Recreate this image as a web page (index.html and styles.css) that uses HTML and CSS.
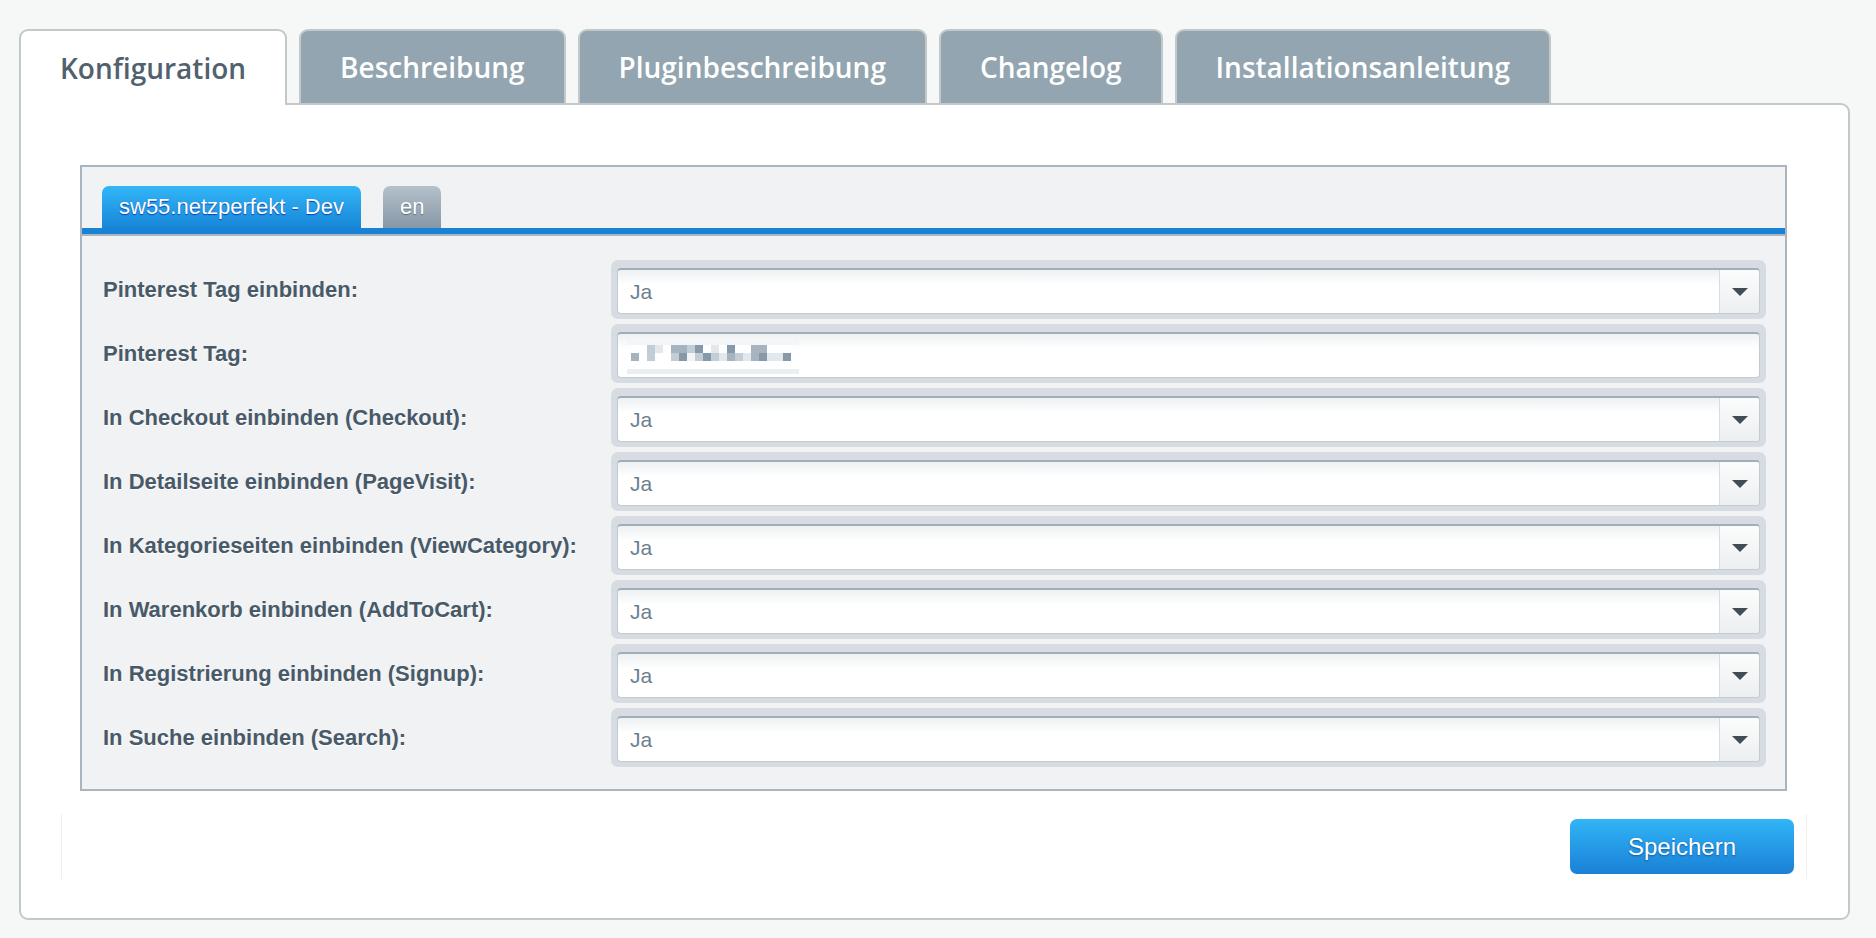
FILE: index.html
```html
<!DOCTYPE html>
<html lang="de">
<head>
<meta charset="utf-8">
<title>Konfiguration</title>
<link rel="stylesheet" href="styles.css">
</head>
<body>
<div class="page">
  <div class="tabs">
    <div class="tab active">Konfiguration</div>
    <div class="tab">Beschreibung</div>
    <div class="tab">Pluginbeschreibung</div>
    <div class="tab">Changelog</div>
    <div class="tab">Installationsanleitung</div>
  </div>
  <div class="panel">
    <div class="config">
      <div class="shop-tabs">
        <div class="shop-tab current">sw55.netzperfekt - Dev</div>
        <div class="shop-tab">en</div>
      </div>
      <div class="shop-bar"></div>
      <div class="rows">
        <div class="row">
          <div class="label">Pinterest Tag einbinden:</div>
          <div class="wrap"><div class="field"><div class="value">Ja</div><div class="trigger"><svg width="16" height="8" viewBox="0 0 16 8"><path d="M0 0H16L8 8Z" fill="#414c57"/></svg></div></div></div>
        </div>
        <div class="row">
          <div class="label">Pinterest Tag:</div>
          <div class="wrap"><div class="field"><div class="value">
            <div class="redact">
              <div class="band"></div>
              <div class="pix">
                <i></i><i></i><i class="b"></i><i class="a"></i><i></i><i class="c"></i><i class="c"></i><i class="b"></i><i class="d"></i><i></i><i class="a"></i><i></i><i class="d"></i><i></i><i></i><i class="c"></i><i class="c"></i><i></i><i></i><i></i>
                <i class="c"></i><i></i><i class="b"></i><i></i><i></i><i class="b"></i><i class="d"></i><i class="w"></i><i class="b"></i><i class="d"></i><i class="b"></i><i class="a"></i><i class="c"></i><i class="b"></i><i class="a"></i><i class="c"></i><i class="d"></i><i class="a"></i><i class="a"></i><i class="d"></i>
              </div>
              <div class="band low"></div>
            </div>
          </div></div></div>
        </div>
        <div class="row">
          <div class="label">In Checkout einbinden (Checkout):</div>
          <div class="wrap"><div class="field"><div class="value">Ja</div><div class="trigger"><svg width="16" height="8" viewBox="0 0 16 8"><path d="M0 0H16L8 8Z" fill="#414c57"/></svg></div></div></div>
        </div>
        <div class="row">
          <div class="label">In Detailseite einbinden (PageVisit):</div>
          <div class="wrap"><div class="field"><div class="value">Ja</div><div class="trigger"><svg width="16" height="8" viewBox="0 0 16 8"><path d="M0 0H16L8 8Z" fill="#414c57"/></svg></div></div></div>
        </div>
        <div class="row">
          <div class="label">In Kategorieseiten einbinden (ViewCategory):</div>
          <div class="wrap"><div class="field"><div class="value">Ja</div><div class="trigger"><svg width="16" height="8" viewBox="0 0 16 8"><path d="M0 0H16L8 8Z" fill="#414c57"/></svg></div></div></div>
        </div>
        <div class="row">
          <div class="label">In Warenkorb einbinden (AddToCart):</div>
          <div class="wrap"><div class="field"><div class="value">Ja</div><div class="trigger"><svg width="16" height="8" viewBox="0 0 16 8"><path d="M0 0H16L8 8Z" fill="#414c57"/></svg></div></div></div>
        </div>
        <div class="row">
          <div class="label">In Registrierung einbinden (Signup):</div>
          <div class="wrap"><div class="field"><div class="value">Ja</div><div class="trigger"><svg width="16" height="8" viewBox="0 0 16 8"><path d="M0 0H16L8 8Z" fill="#414c57"/></svg></div></div></div>
        </div>
        <div class="row">
          <div class="label">In Suche einbinden (Search):</div>
          <div class="wrap"><div class="field"><div class="value">Ja</div><div class="trigger"><svg width="16" height="8" viewBox="0 0 16 8"><path d="M0 0H16L8 8Z" fill="#414c57"/></svg></div></div></div>
        </div>
      </div>
    </div>
    <div class="toolbar">
      <button class="save">Speichern</button>
    </div>
  </div>
</div>
</body>
</html>
```
FILE: styles.css
```css
html, body {
  margin: 0;
  padding: 0;
}
body {
  background: #f6f8f8;
  font-family: "Liberation Sans", Arial, sans-serif;
}
.page {
  padding: 29px 26px 18px 19px;
}
.tabs {
  display: flex;
  align-items: flex-start;
  gap: 12px;
}
.tab {
  box-sizing: border-box;
  height: 74px;
  padding: 0 39px;
  display: flex;
  align-items: center;
  border: 2px solid #c3c8c8;
  border-bottom: none;
  border-radius: 9px 9px 0 0;
  background: #92a5b0;
  color: #ffffff;
  font-family: "Open Sans", sans-serif;
  font-weight: 600;
  font-size: 28px;
}
.tab.active {
  height: 76px;
  margin-bottom: -2px;
  background: #ffffff;
  color: #52616e;
  position: relative;
  z-index: 1;
}
.panel {
  background: #ffffff;
  border: 2px solid #c3c8c8;
  border-radius: 0 9px 9px 9px;
  padding: 60px 41px 39px 40px;
}
.config {
  margin: 0 20px 0 19px;
  border: 2px solid #a9b6c2;
  background: #f0f2f4;
}
.shop-tabs {
  display: flex;
  gap: 22px;
  padding: 19px 0 0 20px;
  height: 42px;
}
.shop-tab {
  box-sizing: border-box;
  height: 42px;
  padding: 0 17px;
  display: flex;
  align-items: center;
  border-radius: 7px 7px 0 0;
  background: linear-gradient(#b4c1cb, #8797a6);
  color: #ffffff;
  font-size: 22px;
  text-shadow: 0 1px 1px rgba(40, 55, 70, 0.5);
}
.shop-tab.current {
  background: linear-gradient(#33b6f7, #1786d8);
  text-shadow: 0 1px 1px #0c3fb0;
}
.shop-bar {
  height: 6px;
  background: #1a82d4;
  border-bottom: 2px solid #a9b6c2;
}
.rows {
  padding: 24px 19px 22px 21px;
}
.row {
  display: flex;
  align-items: center;
  height: 59px;
  margin-bottom: 5px;
}
.row:last-child {
  margin-bottom: 0;
}
.label {
  width: 508px;
  flex: none;
  font-weight: bold;
  font-size: 22px;
  color: #485968;
  text-shadow: 0 1px 0 #ffffff;
}
.wrap {
  flex: 1;
  box-sizing: border-box;
  height: 59px;
  padding: 8px 6px 5px;
  background: #d6dce1;
  border-radius: 7px;
}
.field {
  box-sizing: border-box;
  height: 46px;
  display: flex;
  border: 1px solid #c3cbd1;
  border-top: 2px solid #a4aeb7;
  border-radius: 4px;
  background: linear-gradient(#eef1f3, #ffffff 35%);
  overflow: hidden;
}
.value {
  flex: 1;
  display: flex;
  align-items: center;
  padding-left: 12px;
  font-size: 21px;
  color: #6a7f91;
}
.trigger {
  width: 39px;
  flex: none;
  display: flex;
  align-items: center;
  justify-content: center;
  border-left: 1px solid #d7dce1;
  background: linear-gradient(#fbfcfc, #eceff1);
}
.trigger svg {
  display: block;
  margin-top: 1px;
}
.redact {
  width: 172px;
  margin-left: -3px;
}
.band {
  height: 7px;
  background: #f3f5f6;
}
.band.low {
  height: 5px;
  background: #eceff1;
  margin-top: 8px;
}
.pix {
  display: grid;
  grid-template-columns: repeat(20, 8px);
  grid-auto-rows: 8px;
  padding-left: 4px;
}
.pix i {
  display: block;
  background: #ffffff;
}
.pix i.a { background: #e2e8ec; }
.pix i.b { background: #c3cdd5; }
.pix i.c { background: #a6b4bf; }
.pix i.d { background: #8699a9; }
.pix i.w { background: #f3f5f7; }
.toolbar {
  margin-top: 23px;
  height: 65px;
  box-sizing: border-box;
  border-left: 1px solid #eff1f1;
  border-right: 1px solid #eff1f1;
  display: flex;
  align-items: center;
  justify-content: flex-end;
  padding-right: 12px;
}
.save {
  width: 224px;
  height: 55px;
  border: none;
  border-radius: 7px;
  background: linear-gradient(#31b5f7, #1a80d6);
  color: #ffffff;
  font-family: "Liberation Sans", Arial, sans-serif;
  font-size: 24px;
  text-shadow: 0 1px 2px rgba(0, 40, 110, 0.55);
  padding: 0;
}
```
